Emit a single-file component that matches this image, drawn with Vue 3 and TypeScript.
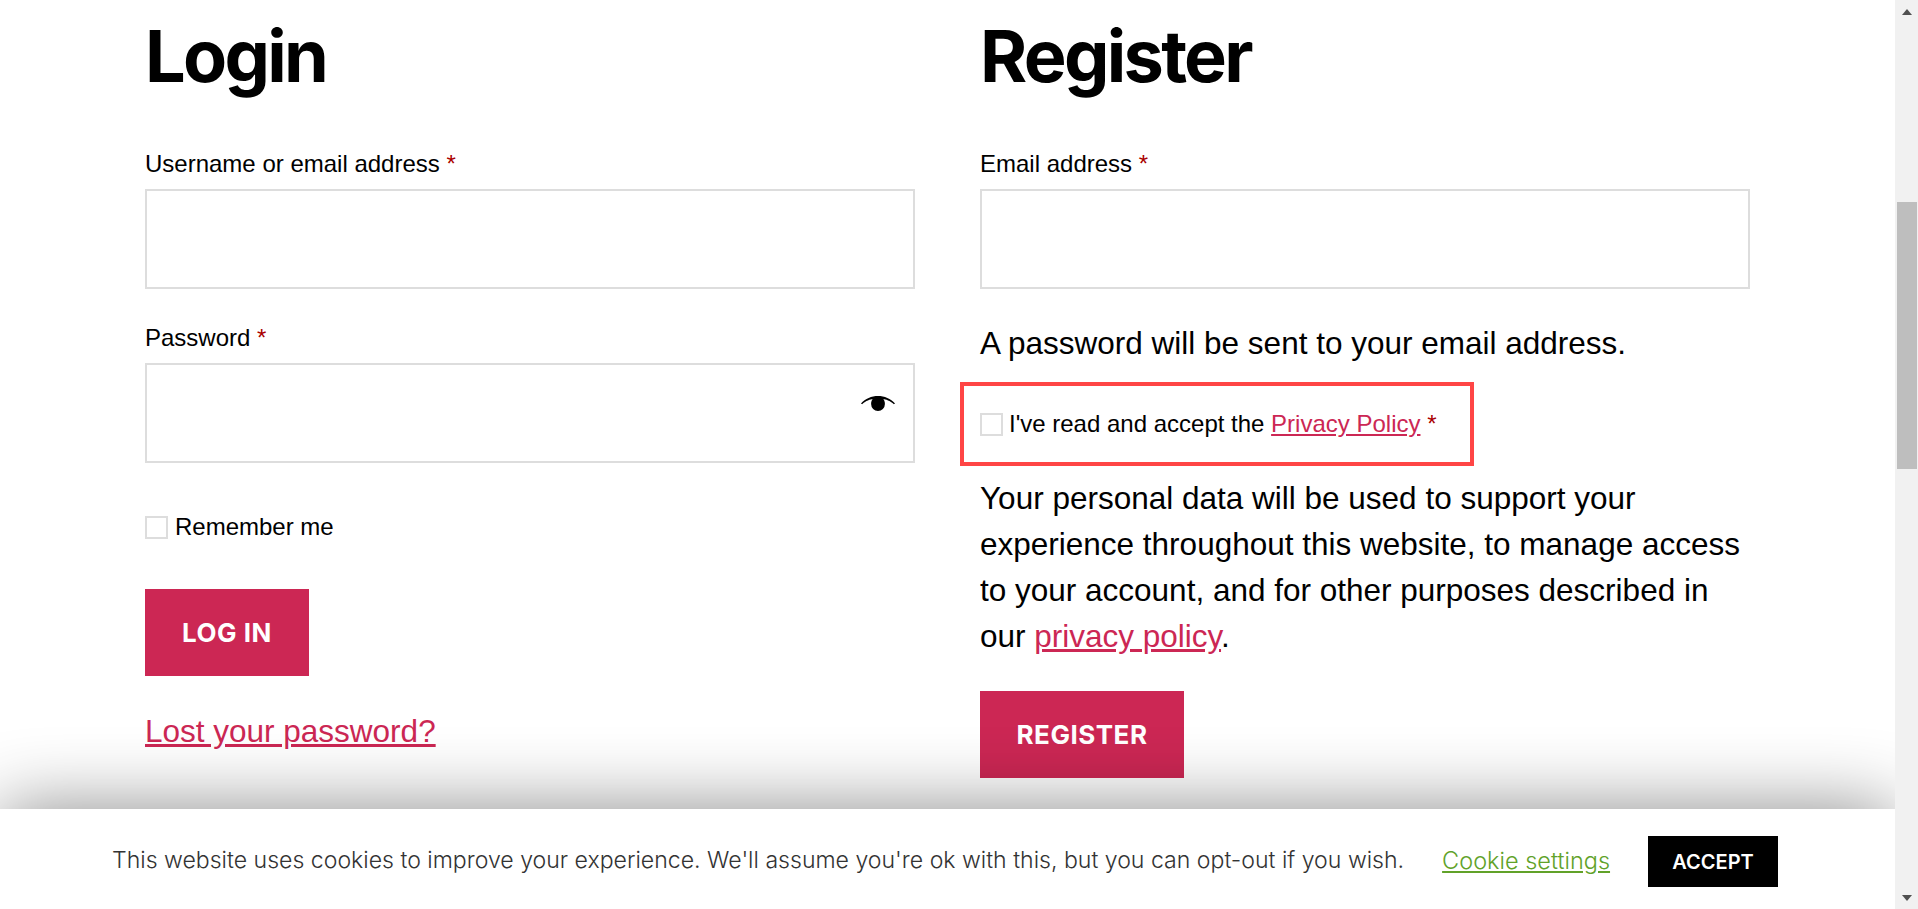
<script setup lang="ts">
const scrollThumbHeight = 267
</script>

<template>
  <div class="page">
    <main class="content">
      <section class="col">
        <h2 class="title">Login</h2>
        <label class="label">Username or email address <span class="req">*</span></label>
        <div class="input"></div>
        <label class="label second">Password <span class="req">*</span></label>
        <div class="input with-eye">
          <svg class="eye" viewBox="0 0 32 14" width="34" height="15" aria-hidden="true">
            <path d="M0 7C4 2.5 10 0 16 0S28 2.5 32 7L31 7.6C27.5 4.5 23 3 21 2.8 22 3.8 22.5 5.6 22.5 7.5A6.5 6.5 0 0 1 9.5 7.5C9.5 5.6 10 3.8 11 2.8 9 3 4.5 4.5 1 7.6Z" fill="#000"/>
          </svg>
        </div>
        <div class="check-row remember">
          <span class="box"></span>
          <span>Remember me</span>
        </div>
        <button class="btn login-btn" type="button">LOG IN</button>
        <a class="lost" href="#">Lost your password?</a>
      </section>
      <section class="col">
        <h2 class="title">Register</h2>
        <label class="label">Email address <span class="req">*</span></label>
        <div class="input"></div>
        <p class="para sent">A password will be sent to your email address.</p>
        <div class="privacy">
          <span class="box"></span>
          <span>I've read and accept the <a href="#">Privacy Policy</a> <span class="req">*</span></span>
        </div>
        <p class="para data">Your personal data will be used to support your experience throughout this website, to manage access to your account, and for other purposes described in our <a href="#">privacy policy</a>.</p>
        <button class="btn reg-btn" type="button">REGISTER</button>
      </section>
      <div class="cookie">
        <span class="cookie-text">This website uses cookies to improve your experience. We'll assume you're ok with this, but you can opt-out if you wish.</span>
        <a class="cookie-link" href="#">Cookie settings</a>
        <button class="accept" type="button">ACCEPT</button>
      </div>
    </main>
    <aside class="scrollbar">
      <div class="arrow-btn"><span class="arrow up"></span></div>
      <div class="track"><div class="thumb" :style="{ height: scrollThumbHeight + 'px' }"></div></div>
      <div class="arrow-btn"><span class="arrow down"></span></div>
    </aside>
  </div>
</template>

<style>
html, body { margin: 0; padding: 0; overflow: hidden; background: #fff; }
</style>

<style scoped>
.page { display: flex; width: 1918px; height: 909px; overflow: hidden; font-family: "Liberation Sans", Arial, sans-serif; color: #000; background: #fff; }
.content { position: relative; flex: 1; display: grid; grid-template-columns: 770px 770px; column-gap: 65px; padding-left: 145px; overflow: hidden; align-content: start; }
.col { display: flex; flex-direction: column; align-items: flex-start; min-width: 0; }
.title { font-family: Inter, sans-serif; font-weight: 700; font-size: 72px; line-height: 80px; letter-spacing: -2.7px; margin: 16px 0 0; height: 80px; }
.label { display: block; font-size: 24px; line-height: 30px; margin-top: 53px; }
.label.second { margin-top: 34px; }
.req { color: #a00; }
.input { box-sizing: border-box; width: 770px; height: 100px; margin-top: 10px; border: 2.5px solid #ddd; position: relative; background: #fff; }
.with-eye .eye { position: absolute; right: 18.5px; top: 31px; }
.check-row { display: flex; align-items: center; gap: 7px; font-size: 24px; line-height: 30px; }
.remember { margin-top: 49px; }
.box { box-sizing: border-box; width: 23px; height: 23px; border: 2.5px solid #ddd; flex: none; }
.btn { border: 0; color: #fff; background: #cc2754; font-family: Inter, sans-serif; font-weight: 700; font-size: 26px; letter-spacing: 0.5px; height: 87px; padding: 0; }
.login-btn { width: 164px; margin-top: 47px; }
.lost { margin-top: 32px; font-size: 31.5px; line-height: 46px; color: #cc2754; }
.para { font-size: 31.5px; line-height: 46px; margin: 0; }
.para a { color: #cc2754; }
.sent { margin-top: 31px; }
.privacy { display: flex; align-items: center; gap: 6px; box-sizing: border-box; width: 514px; height: 84px; margin: 16px 0 0 -20px; padding-left: 16px; border: 4.5px solid #ff4545; font-size: 24px; }
.privacy a { color: #cc2754; }
.data { margin-top: 9px; }
.reg-btn { width: 204px; margin-top: 32px; }
.cookie { position: absolute; left: 0; right: 0; top: 809px; height: 100px; box-sizing: border-box; padding: 2px 0 0 112px; background: #fff; box-shadow: 0 0 75px rgba(0,0,0,0.46); display: flex; align-items: center; font-family: Inter, sans-serif; font-size: 23.08px; color: #333; font-weight: 300; }
.cookie-text { white-space: nowrap; }
.cookie-link { margin-left: 38px; font-size: 23.5px; color: #61a229; }
.accept { margin: 3px 0 0 38px; width: 130px; height: 51px; border: 0; background: #000; color: #fff; font-family: Inter, sans-serif; font-weight: 600; font-size: 20px; padding: 0; }
.scrollbar { width: 23px; flex: none; background: #f1f1f1; display: flex; flex-direction: column; }
.arrow-btn { height: 23px; display: flex; align-items: center; justify-content: center; flex: none; }
.arrow { width: 0; height: 0; border-left: 5.5px solid transparent; border-right: 5.5px solid transparent; }
.arrow.up { border-bottom: 6px solid #505050; }
.arrow.down { border-top: 6px solid #505050; }
.track { flex: 1; padding-top: 179px; }
.thumb { background: #bebebe; margin: 0 1px 0 2px; }
</style>
